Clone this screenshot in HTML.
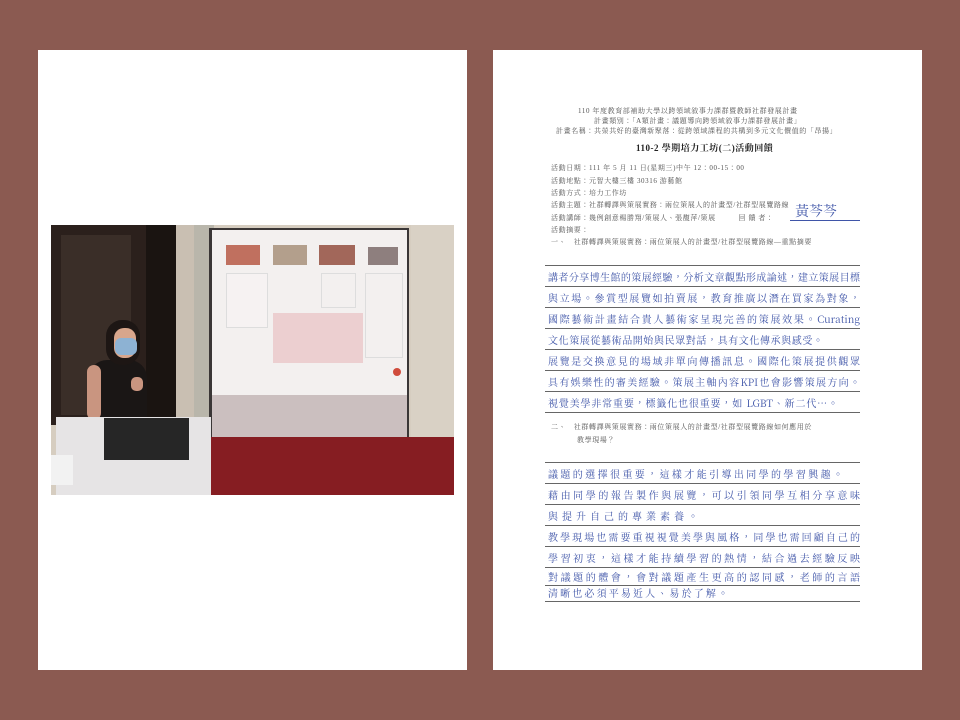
<!DOCTYPE html>
<html><head><meta charset="utf-8"><style>
*{margin:0;padding:0;box-sizing:border-box}
body{width:960px;height:720px;background:#8b5a51;position:relative;overflow:hidden;font-family:"Liberation Serif","Noto Serif CJK SC",serif}
.p{position:absolute;background:#fff}
.a{position:absolute}
.t{position:absolute;color:#555;font-size:7px;white-space:nowrap;letter-spacing:0.6px;font-family:"Liberation Serif","Noto Serif CJK TC","Noto Sans CJK TC",serif}
.h{position:absolute;left:548px;width:312px;color:#3f55a8;font-size:10px;line-height:14px;white-space:nowrap;font-family:"Noto Serif CJK TC","Noto Sans CJK TC",serif;text-align:justify;text-align-last:justify}
.r{position:absolute;left:545px;width:315px;height:1px;background:#666}
</style></head><body>
<div class="p" style="left:38px;top:50px;width:429px;height:620px"></div>
<div class="p" style="left:493px;top:50px;width:429px;height:620px"></div>

<!-- photo -->
<div class="a" style="left:51px;top:225px;width:403px;height:270px;background:#d6cdc0;overflow:hidden">
 <div class="a" style="left:0;top:0;width:120px;height:200px;background:#2b201c"></div>
 <div class="a" style="left:10px;top:10px;width:70px;height:180px;background:#3a2e28"></div>
 <div class="a" style="left:95px;top:0;width:30px;height:200px;background:#1a1411"></div>
 <div class="a" style="left:125px;top:0;width:18px;height:200px;background:#c9bfb2"></div>
 <div class="a" style="left:143px;top:0;width:20px;height:210px;background:#b9b6ab"></div>
 <div class="a" style="left:158px;top:3px;width:200px;height:213px;background:#3a3636"></div>
 <div class="a" style="left:161px;top:5px;width:195px;height:165px;background:#f3f0ef"></div>
 <div class="a" style="left:161px;top:170px;width:195px;height:43px;background:#cbbfbf"></div>
 <div class="a" style="left:175px;top:20px;width:34px;height:20px;background:#c0705f"></div>
 <div class="a" style="left:222px;top:20px;width:34px;height:20px;background:#b39f8c"></div>
 <div class="a" style="left:268px;top:20px;width:36px;height:20px;background:#a2675a"></div>
 <div class="a" style="left:317px;top:22px;width:30px;height:18px;background:#8e7f7e"></div>
 <div class="a" style="left:175px;top:48px;width:42px;height:55px;border:1px solid #ddd;background:#f6f2f2"></div>
 <div class="a" style="left:270px;top:48px;width:35px;height:35px;border:1px solid #ddd"></div>
 <div class="a" style="left:222px;top:88px;width:90px;height:50px;background:#eccfd0"></div>
 <div class="a" style="left:314px;top:48px;width:38px;height:85px;border:1px solid #ddd"></div>
 <div class="a" style="left:342px;top:143px;width:8px;height:8px;border-radius:50%;background:#d04c3c"></div>
 <div class="a" style="left:150px;top:212px;width:253px;height:58px;background:#861d22"></div>
 <div class="a" style="left:360px;top:0;width:43px;height:212px;background:#d9d1c5"></div>
 <!-- person -->
 <div class="a" style="left:38px;top:135px;width:58px;height:65px;border-radius:18px 18px 0 0;background:#1a1615"></div>
 <div class="a" style="left:55px;top:95px;width:34px;height:45px;border-radius:16px;background:#1d1614"></div>
 <div class="a" style="left:63px;top:103px;width:22px;height:30px;border-radius:10px;background:#d8a68c"></div>
 <div class="a" style="left:64px;top:113px;width:22px;height:17px;border-radius:6px;background:#8db2d3"></div>
 <div class="a" style="left:36px;top:140px;width:14px;height:55px;border-radius:7px;background:#c99580"></div>
 <div class="a" style="left:80px;top:152px;width:12px;height:14px;border-radius:5px;background:#c99580"></div>
 <!-- podium -->
 <div class="a" style="left:5px;top:192px;width:155px;height:78px;background:#e6e4e5"></div>
 <div class="a" style="left:53px;top:193px;width:85px;height:42px;background:#262626"></div>
 <div class="a" style="left:0;top:230px;width:22px;height:30px;background:#f2f2f2"></div>
</div>

<!-- doc header -->
<div class="t" style="top:106px;left:578px">110 年度教育部補助大學以跨領域敘事力課群暨教師社群發展計畫</div>
<div class="t" style="top:116px;left:594px">計畫類別：「A類計畫：議題導向跨領域敘事力課群發展計畫」</div>
<div class="t" style="top:126px;left:556px">計畫名稱：共榮共好的臺灣新聚落：從跨領域課程的共構到多元文化價值的「昂揚」</div>
<div class="t" style="top:141px;left:636px;font-size:9px;font-weight:bold;color:#222;letter-spacing:0.5px">110-2 學期培力工坊(二)活動回饋</div>
<div class="t" style="top:163px;left:551px">活動日期：111 年 5 月 11 日(星期三)中午 12：00-15：00</div>
<div class="t" style="top:176px;left:551px">活動地點：元智大樓三樓 30316 游藝館</div>
<div class="t" style="top:188px;left:551px">活動方式：培力工作坊</div>
<div class="t" style="top:200px;left:551px">活動主題：社群轉譯與策展實務：兩位策展人的計畫型/社群型展覽路線</div>
<div class="t" style="top:213px;left:551px">活動講師：幾例創意楊勝翔/策展人、張馥萍/策展　　　回 饋 者：</div>
<div class="a" style="left:795px;top:201px;color:#3f55a8;font-size:14px;font-family:'Noto Serif CJK TC',serif">黃芩芩</div>
<div class="a" style="left:790px;top:220px;width:70px;height:1px;background:#3f55a8"></div>
<div class="t" style="top:225px;left:551px">活動摘要：</div>
<div class="t" style="top:237px;left:551px">一、　社群轉譯與策展實務：兩位策展人的計畫型/社群型展覽路線—重點摘要</div>

<!-- section 1 -->
<div class="r" style="top:265px"></div><div class="r" style="top:286px"></div><div class="r" style="top:307px"></div><div class="r" style="top:328px"></div><div class="r" style="top:349px"></div><div class="r" style="top:370px"></div><div class="r" style="top:391px"></div><div class="r" style="top:412px"></div>
<div class="h" style="top:270px">講者分享博生館的策展經驗，分析文章觀點形成論述，建立策展目標</div>
<div class="h" style="top:291px">與立場。參賞型展覽如拍賣展，教育推廣以潛在買家為對象，</div>
<div class="h" style="top:312px">國際藝術計畫結合貴人藝術家呈現完善的策展效果。Curating</div>
<div class="h" style="top:333px;width:275px">文化策展從藝術品開始與民眾對話，具有文化傳承與感受。</div>
<div class="h" style="top:354px">展覽是交換意見的場域非單向傳播訊息。國際化策展提供觀眾</div>
<div class="h" style="top:375px">具有娛樂性的審美經驗。策展主軸內容KPI也會影響策展方向。</div>
<div class="h" style="top:396px;width:290px">視覺美學非常重要，標籤化也很重要，如 LGBT、新二代⋯。</div>

<div class="t" style="top:422px;left:551px">二、　社群轉譯與策展實務：兩位策展人的計畫型/社群型展覽路線如何應用於</div>
<div class="t" style="top:435px;left:577px">教學現場？</div>

<!-- section 2 -->
<div class="r" style="top:462px"></div><div class="r" style="top:483px"></div><div class="r" style="top:504px"></div><div class="r" style="top:525px"></div><div class="r" style="top:546px"></div><div class="r" style="top:567px"></div><div class="r" style="top:585px"></div><div class="r" style="top:601px"></div>
<div class="h" style="top:467px;width:295px">議題的選擇很重要，這樣才能引導出同學的學習興趣。</div>
<div class="h" style="top:488px">藉由同學的報告製作與展覽，可以引領同學互相分享意味</div>
<div class="h" style="top:509px;width:150px">與提升自己的專業素養。</div>
<div class="h" style="top:530px">教學現場也需要重視視覺美學與風格，同學也需回顧自己的</div>
<div class="h" style="top:551px">學習初衷，這樣才能持續學習的熱情，結合過去經驗反映</div>
<div class="h" style="top:570px">對議題的體會，會對議題產生更高的認同感，老師的言語</div>
<div class="h" style="top:586px;width:180px">清晰也必須平易近人、易於了解。</div>
</body></html>
